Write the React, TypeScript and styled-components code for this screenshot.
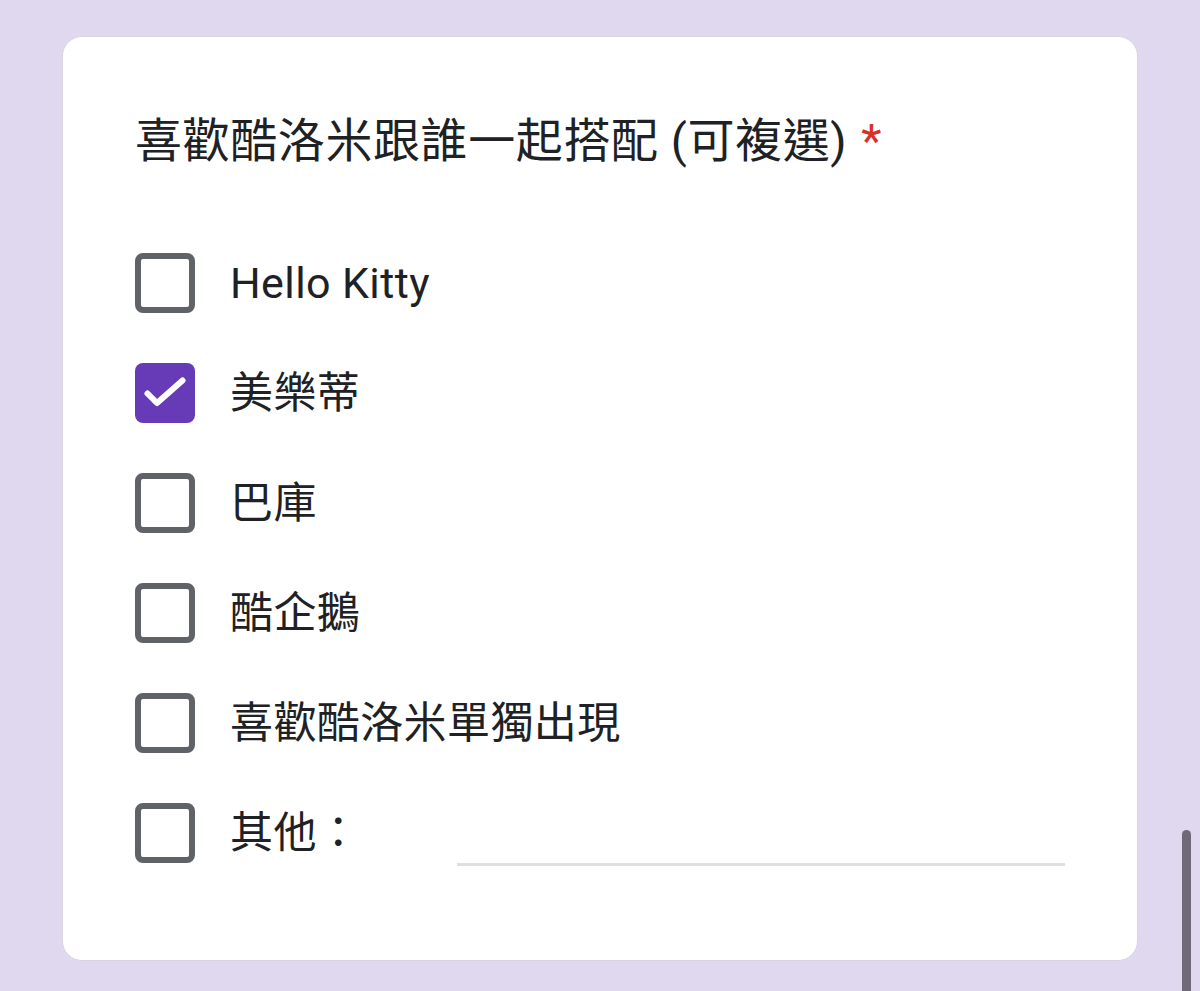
import React from "react";
import styled, { createGlobalStyle } from "styled-components";

const Global = createGlobalStyle`
  html, body { margin: 0; padding: 0; background: #dfd8ee; }
  body { font-family: Roboto, "Noto Sans CJK TC", sans-serif; height: 991px; overflow: hidden; }
`;

const Page = styled.div`
  padding: 36px 62px 30px 62px;
  box-sizing: border-box;
  height: 991px;
`;

const Card = styled.div`
  background: #ffffff;
  border: 1px solid #d9d5e0;
  border-radius: 20px;
  height: 925px;
  box-sizing: border-box;
  padding: 76px 72px 0 72px;
  display: flex;
  flex-direction: column;
`;

const Title = styled.div`
  font-family: Roboto, "Noto Sans CJK TC", sans-serif;
  font-size: 47px;
  line-height: 56px;
  color: #202124;
  letter-spacing: 0.6px;
`;

const Star = styled.span`
  color: #d93025;
  margin-left: 14px;
`;

const List = styled.div`
  margin-top: 84px;
  display: flex;
  flex-direction: column;
  gap: 50px;
`;

const Row = styled.div`
  display: flex;
  align-items: center;
  height: 60px;
`;

const Box = styled.div<{ $checked?: boolean }>`
  width: 60px;
  height: 60px;
  box-sizing: border-box;
  border-radius: 8px;
  border: ${(p) => (p.$checked ? "none" : "6px solid #5f6368")};
  background: ${(p) => (p.$checked ? "#673ab7" : "#fff")};
  display: flex;
  align-items: center;
  justify-content: center;
  flex-shrink: 0;
`;

const Label = styled.span`
  margin-left: 35px;
  font-size: 43px;
  line-height: 56px;
  color: #202124;
  letter-spacing: 0.4px;
  font-family: Roboto, "Noto Sans CJK TC", sans-serif;
`;

const Field = styled.div`
  flex: 1;
  align-self: flex-end;
  margin-left: 97px;
  height: 3px;
  background: #e0e0e0;
  margin-bottom: -3px;
`;

const Scrollbar = styled.div`
  position: fixed;
  left: 1182px;
  top: 830px;
  width: 9px;
  height: 200px;
  border-radius: 5px;
  background: #6f6879;
`;

const Check = () => (
  <svg width="60" height="60" viewBox="0 0 60 60">
    <path d="M12.5 30.5L22 40L47.5 17.5" fill="none" stroke="#fff" strokeWidth="6" strokeLinecap="round" strokeLinejoin="round" />
  </svg>
);

const options = [
  { label: "Hello Kitty", checked: false },
  { label: "美樂蒂", checked: true },
  { label: "巴庫", checked: false },
  { label: "酷企鵝", checked: false },
  { label: "喜歡酷洛米單獨出現", checked: false },
];

export default function App() {
  return (
    <>
      <Global />
      <Page>
        <Card>
          <Title>
            喜歡酷洛米跟誰一起搭配 (可複選)<Star>*</Star>
          </Title>
          <List>
            {options.map((o) => (
              <Row key={o.label}>
                <Box $checked={o.checked}>{o.checked && <Check />}</Box>
                <Label>{o.label}</Label>
              </Row>
            ))}
            <Row>
              <Box />
              <Label>其他：</Label>
              <Field />
            </Row>
          </List>
        </Card>
      </Page>
      <Scrollbar />
    </>
  );
}
